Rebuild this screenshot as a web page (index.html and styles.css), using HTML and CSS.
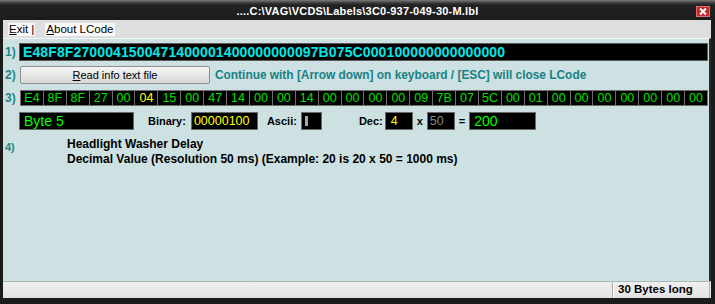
FILE: index.html
```html
<!DOCTYPE html>
<html>
<head>
<meta charset="utf-8">
<link rel="stylesheet" href="styles.css">
</head>
<body>
<div class="window">
  <div class="titlebar">
    <span class="title">....C:\VAG\VCDS\Labels\3C0-937-049-30-M.lbl</span>
    <span class="close"><svg width="14" height="11" viewBox="0 0 14 11"><rect x="0.5" y="0.5" width="13" height="10" fill="#c0282c" stroke="#e07070"/><path d="M4 2.5 L10 8.5 M10 2.5 L4 8.5" stroke="#fff" stroke-width="2"/></svg></span>
  </div>
  <div class="frame">
    <div class="menubar">
      <span class="mi"><u>E</u>xit |</span>
      <span class="mi"><u>A</u>bout LCode</span>
    </div>
    <div class="client">
      <div class="row r1">
        <span class="lbl">1)</span>
        <div class="hexline">E48F8F2700041500471400001400000000097B075C000100000000000000</div>
      </div>
      <div class="row r2">
        <span class="lbl">2)</span>
        <button class="btn"><u>R</u>ead info text file</button>
        <span class="hint">Continue with [Arrow down] on keyboard / [ESC] will close LCode</span>
      </div>
      <div class="row r3">
        <span class="lbl">3)</span>
        <div class="cells">
          <span>E4</span><span>8F</span><span>8F</span><span>27</span><span>00</span><span class="sel">04</span><span>15</span><span>00</span><span>47</span><span>14</span><span>00</span><span>00</span><span>14</span><span>00</span><span>00</span><span>00</span><span>00</span><span>09</span><span>7B</span><span>07</span><span>5C</span><span>00</span><span>01</span><span>00</span><span>00</span><span>00</span><span>00</span><span>00</span><span>00</span><span>00</span>
        </div>
      </div>
      <div class="row r5">
        <span class="lbl"></span>
        <div class="box bytebox">Byte 5</div>
        <span class="cap cap-bin">Binary:</span>
        <div class="box binbox">00000100</div>
        <span class="cap cap-asc">Ascii:</span>
        <div class="box ascbox"><i class="glyph"></i></div>
        <span class="cap cap-dec">Dec:</span>
        <div class="box decbox">4</div>
        <span class="cap op">x</span>
        <div class="box mulbox">50</div>
        <span class="cap op">=</span>
        <div class="box resbox">200</div>
      </div>
      <div class="row r4">
        <span class="lbl lbl4">4)</span>
        <div class="desc">
          <div>Headlight Washer Delay</div>
          <div>Decimal Value (Resolution 50 ms) (Example: 20 is 20 x 50 = 1000 ms)</div>
        </div>
      </div>
    </div>
    <div class="statusbar">
      <div class="sb-main"></div>
      <div class="sb-panel">30 Bytes long</div>
    </div>
  </div>
</div>
</body>
</html>
```

FILE: styles.css
```css
* { box-sizing: border-box; }
html, body { margin: 0; padding: 0; }
body {
  width: 715px;
  height: 304px;
  overflow: hidden;
  font-family: "Liberation Sans", Arial, sans-serif;
  background: #1a1a1a;
}
.window {
  width: 715px;
  height: 304px;
  display: flex;
  flex-direction: column;
  background: #1b1b1b;
}
.titlebar {
  height: 20px;
  position: relative;
  display: flex;
  align-items: center;
  justify-content: center;
  background: linear-gradient(#7a7a7a 0px, #3a3a3a 3px, #222 5px, #1c1c1c 20px);
}
.title {
  color: #fff;
  font-weight: bold;
  font-size: 11px;
  letter-spacing: 0.2px;
  padding-top: 1px;
}
.close {
  position: absolute;
  right: 5px;
  top: 6px;
  width: 14px;
  height: 11px;
  display: block;
}
.close svg { display: block; }
.frame {
  flex: 1;
  display: flex;
  flex-direction: column;
  margin: 0 4px 6px 3px;
}
.menubar {
  height: 18px;
  background: #dedede;
  display: flex;
  align-items: center;
  padding-left: 5px;
  gap: 10px;
  font-size: 11.5px;
  color: #000;
}
.mi {
  background: #fafafa;
  padding: 0 1px;
  line-height: 13px;
}
.client {
  flex: 1;
  background: #cde0e2;
  border-top: 1px solid #f2f6f6;
  border-right: 2px solid #2a2a2a;
  padding: 4px 0 0 2px;
  display: flex;
  flex-direction: column;
}
.row {
  display: flex;
  align-items: center;
}
.lbl {
  width: 14px;
  flex: none;
  color: #218585;
  font-weight: bold;
  font-size: 12px;
}
.r1 { height: 18px; }
.hexline {
  flex: 1;
  height: 18px;
  margin-right: 1px;
  background: #000;
  border: 1px solid #5a5a5a;
  color: #00e8e8;
  font-weight: bold;
  font-size: 14px;
  letter-spacing: 0.12px;
  line-height: 16px;
  padding-left: 3px;
}
.r2 { height: 18px; margin-top: 5px; }
.btn {
  width: 190px;
  height: 18px;
  margin-left: 1px;
  border: 1px solid #8f8f8f;
  border-radius: 2px;
  background: linear-gradient(#f6f6f6, #e6e6e6 50%, #d8d8d8);
  font-family: "Liberation Sans", Arial, sans-serif;
  font-size: 11px;
  color: #000;
  padding: 0;
}
.hint {
  margin-left: 5px;
  color: #188282;
  font-weight: bold;
  font-size: 11.9px;
}
.r3 { height: 16px; margin-top: 6px; }
.cells {
  width: 688px;
  height: 16px;
  margin-left: 1px;
  display: grid;
  grid-template-columns: repeat(30, 1fr);
  gap: 1px;
  padding: 1px;
  background: #6e6e6e;
}
.cells span {
  background: #000;
  color: #00e000;
  font-size: 12.5px;
  line-height: 14px;
  text-align: center;
}
.cells span.sel { color: #ffff00; }
.r5 { height: 18px; margin-top: 6px; }
.box {
  height: 18px;
  background: #000;
  border: 1px solid #6a6a6a;
}
.bytebox {
  width: 115px;
  color: #00ff00;
  font-size: 14px;
  line-height: 16px;
  padding-left: 4px;
}
.cap {
  font-weight: bold;
  font-size: 11px;
  color: #000;
}
.cap-bin { margin-left: 14px; margin-right: 5px; }
.binbox {
  width: 67px;
  color: #ffff00;
  font-size: 12.5px;
  line-height: 16px;
  padding-left: 2px;
}
.cap-asc { margin-left: 9px; margin-right: 4px; }
.ascbox {
  width: 21px;
}
.glyph {
  display: block;
  width: 3px;
  height: 10px;
  margin: 3px 0 0 3px;
  background: #a8a8a8;
}
.cap-dec { margin-left: 37px; margin-right: 2px; }
.decbox {
  width: 28px;
  color: #ffff00;
  font-size: 12.5px;
  line-height: 16px;
  padding-left: 5px;
}
.op { margin: 0 4px; }
.mulbox {
  width: 28px;
  color: #8a8a8a;
  font-size: 12.5px;
  line-height: 16px;
  padding-left: 2px;
}
.resbox {
  width: 67px;
  color: #00ff00;
  font-size: 14px;
  line-height: 16px;
  padding-left: 4px;
}
.r4 { margin-top: 7px; align-items: flex-start; }
.lbl4 { font-size: 11px; margin-top: 4px; }
.desc {
  margin-left: 48px;
  font-weight: bold;
  font-size: 12px;
  line-height: 15px;
  color: #000;
}
.statusbar {
  height: 17px;
  display: flex;
  border-top: 1px solid #a9b8b8;
  background: linear-gradient(#f0f0f0, #e2e2e2);
}
.sb-main { flex: 1; }
.sb-panel {
  width: 98px;
  border-left: 1px solid #a8a8a8;
  border-right: 1px solid #b0b0b0;
  box-shadow: inset 1px 0 0 #fff;
  font-weight: bold;
  font-size: 11.5px;
  line-height: 15px;
  padding-left: 5px;
  color: #000;
  margin-right: 1px;
}
```
